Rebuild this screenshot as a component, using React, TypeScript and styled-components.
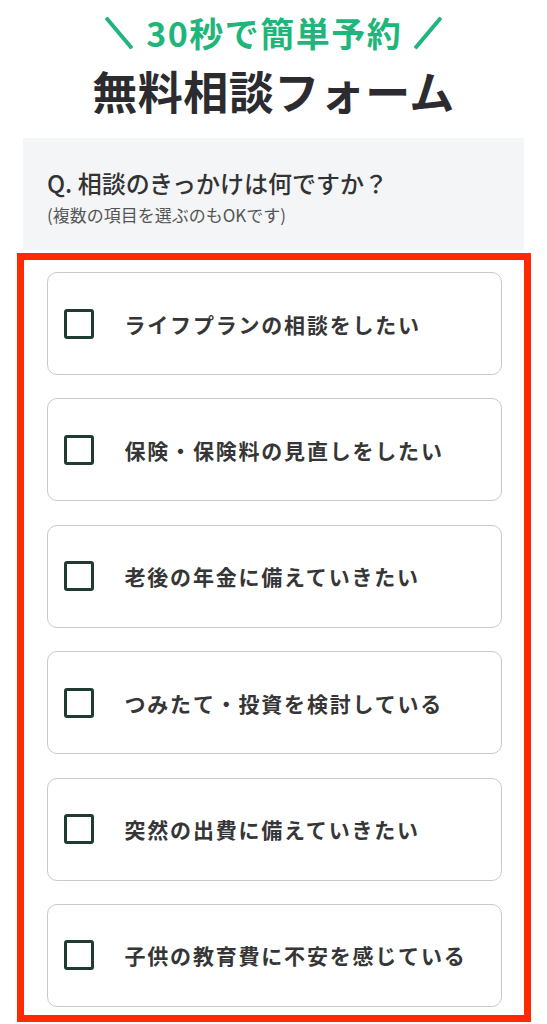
import React from 'react';
import styled, {createGlobalStyle} from "styled-components";

const options = [
    "ライフプランの相談をしたい",
    "保険・保険料の見直しをしたい",
    "老後の年金に備えていきたい",
    "つみたて・投資を検討している",
    "突然の出費に備えていきたい",
    "子供の教育費に不安を感じている",
]

const App: React.FC = () => {
    return (
        <Page>
            <GlobalStyle />
            <Catch>
                <Slash $dir={"left"} />
                <CatchText>30秒で簡単予約</CatchText>
                <Slash $dir={"right"} />
            </Catch>
            <Title>無料相談フォーム</Title>
            <QuestionBox>
                <Question>Q. 相談のきっかけは何ですか？</Question>
                <Note>(複数の項目を選ぶのもOKです)</Note>
            </QuestionBox>
            <Highlight>
                {options.map((label, index: number) =>
                    <OptionCard key={index}>
                        <CheckBox type={"checkbox"} />
                        <OptionLabel>{label}</OptionLabel>
                    </OptionCard>
                )}
            </Highlight>
        </Page>
    )
}

const GlobalStyle = createGlobalStyle`
  body {
    margin: 0;
    background: #fff;
    font-family: "Noto Sans CJK JP", "Noto Sans", sans-serif;
  }
`
const Page = styled.div`
  width: 547px;
  padding-top: 14px;
`
const Catch = styled.div`
  display: flex;
  justify-content: center;
  align-items: center;
  gap: 25px;
  height: 38px;
  color: #1fb57b;
`
const Slash = styled.span<{ $dir: "left" | "right" }>`
  display: inline-block;
  width: 4px;
  height: 40px;
  border-radius: 1px;
  background: #1fb57b;
  transform: rotate(${p => p.$dir === "left" ? "-40deg" : "40deg"});
`
const CatchText = styled.span`
  font-size: 34px;
  font-weight: 700;
  line-height: 38px;
  letter-spacing: 1.5px;
  margin-right: -1.5px;
`
const Title = styled.h1`
  margin: 12px 0 0;
  text-align: center;
  font-size: 45px;
  line-height: 54px;
  font-weight: 700;
  color: #2b2b30;
  letter-spacing: 0.5px;
`
const QuestionBox = styled.div`
  width: 501px;
  margin: 20px auto 0;
  padding: 29px 24px 24px;
  box-sizing: border-box;
  background: #f4f5f7;
`
const Question = styled.div`
  font-size: 24px;
  line-height: 32px;
  font-weight: 500;
  color: #333;
`
const Note = styled.div`
  margin-top: 5px;
  font-size: 17px;
  line-height: 22px;
  color: #555;
`
const Highlight = styled.div`
  display: grid;
  grid-gap: 23.4px;
  width: 514px;
  margin: 3px auto 0;
  padding: 12px 22px 8px 23px;
  box-sizing: border-box;
  border: 7px solid #ff2a00;
`
const OptionCard = styled.label`
  display: flex;
  align-items: center;
  height: 103px;
  padding-left: 16px;
  box-sizing: border-box;
  border: 1px solid #c9c9c9;
  border-radius: 10px;
  background: #fff;
`
const CheckBox = styled.input`
  appearance: none;
  width: 30px;
  height: 30px;
  margin: 0 31px 0 0;
  border: 3px solid #1f3b33;
  border-radius: 3px;
  box-sizing: border-box;
  flex-shrink: 0;
`
const OptionLabel = styled.span`
  font-size: 21px;
  font-weight: 600;
  color: #363636;
  letter-spacing: 1.8px;
`
export default App
